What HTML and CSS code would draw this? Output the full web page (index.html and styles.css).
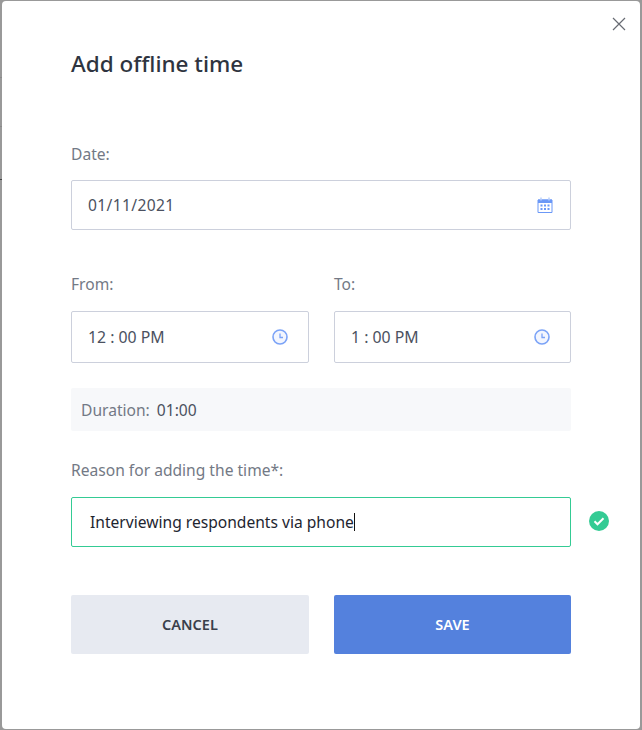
FILE: index.html
```html
<!DOCTYPE html>
<html lang="en">
<head>
<meta charset="utf-8">
<title>Add offline time</title>
<link rel="stylesheet" href="styles.css">
</head>
<body>
<div class="backdrop">
  <span class="bg-line bg-line-1"></span>
  <span class="bg-line bg-line-2"></span>
  <span class="bg-line bg-line-3"></span>
  <main class="modal">
    <button class="close" aria-label="Close">
      <svg width="14" height="14" viewBox="0 0 14 14"><path d="M1 1l12 12M13 1L1 13" fill="none" stroke="#676b73" stroke-width="1.2"/></svg>
    </button>
    <h1 class="title">Add offline time</h1>
    <div class="label label-date">Date:</div>
    <div class="field field-date">
      <span class="value value-date">01/11/2021</span>
      <svg class="icon" width="16" height="16" viewBox="0 0 16 16">
        <path d="M1 3h14v12.500H1z" fill="#fff" stroke="#6b98f7" stroke-width="1"/>
        <path d="M1 2.500h14V6H1z" fill="#6b98f7"/>
        <path d="M4 .5v3M12 .5v3" stroke="#b9cffb" stroke-width="1.500"/>
        <g fill="#6b98f7"><rect x="3.500" y="7.500" width="2" height="2"/><rect x="7" y="7.500" width="2" height="2"/><rect x="10.500" y="7.500" width="2" height="2"/><rect x="3.500" y="11" width="2" height="2"/><rect x="7" y="11" width="2" height="2"/><rect x="10.500" y="11" width="2" height="2"/></g>
      </svg>
    </div>
    <div class="times">
      <div class="time-col">
        <div class="label">From:</div>
        <div class="field field-time">
          <span class="value">12 : 00 PM</span>
          <svg class="icon" width="16" height="16" viewBox="0 0 16 16"><circle cx="8" cy="8" r="7" fill="#f3f6fe" stroke="#7ba3f7" stroke-width="1.600"/><path d="M8 4.500V8.500H11" fill="none" stroke="#7ba3f7" stroke-width="1.300"/></svg>
        </div>
      </div>
      <div class="time-col">
        <div class="label">To:</div>
        <div class="field field-time">
          <span class="value">1 : 00 PM</span>
          <svg class="icon" width="16" height="16" viewBox="0 0 16 16"><circle cx="8" cy="8" r="7" fill="#f3f6fe" stroke="#7ba3f7" stroke-width="1.600"/><path d="M8 4.500V8.500H11" fill="none" stroke="#7ba3f7" stroke-width="1.300"/></svg>
        </div>
      </div>
    </div>
    <div class="duration"><span class="duration-label">Duration:</span><span class="duration-value">01:00</span></div>
    <div class="label label-reason">Reason for adding the time*:</div>
    <div class="reason-row">
      <div class="field field-reason"><span class="reason-text">Interviewing respondents via phone</span><span class="caret"></span></div>
      <svg class="valid" width="20" height="20" viewBox="0 0 20 20"><circle cx="10" cy="10" r="10" fill="#34cb94"/><path d="M5.500 10.300l3 3 6-6" fill="none" stroke="#fff" stroke-width="2"/></svg>
    </div>
    <div class="actions">
      <button class="btn btn-cancel">CANCEL</button>
      <button class="btn btn-save">SAVE</button>
    </div>
  </main>
</div>
</body>
</html>
```
FILE: styles.css
```css
html, body {
  margin: 0;
  padding: 0;
  height: 100%;
}
body {
  font-family: "Noto Sans", "Open Sans", sans-serif;
  overflow: hidden;
}
.backdrop {
  position: relative;
  box-sizing: border-box;
  width: 642px;
  height: 730px;
  padding: 1px 2px;
  background: #999999;
}
.bg-line {
  position: absolute;
  left: 0;
  width: 2px;
  height: 1px;
  background: #8a8a8a;
}
.bg-line-1 { top: 77px; }
.bg-line-2 { top: 126px; }
.bg-line-3 { top: 179px; background: #444444; }
.modal {
  position: relative;
  box-sizing: border-box;
  height: 728px;
  padding: 48px 69px 0;
  background: #ffffff;
  border-radius: 4px;
}
.close {
  position: absolute;
  top: 16px;
  right: 14px;
  display: flex;
  padding: 0;
  border: 0;
  background: none;
}
.title {
  margin: 0;
  font-size: 22.500px;
  line-height: 30px;
  font-weight: 500;
  color: #2e3440;
}
.label {
  font-size: 15.600px;
  line-height: 20px;
  color: #737985;
}
.label-date {
  margin-top: 65px;
}
.field {
  box-sizing: border-box;
  display: flex;
  align-items: center;
  justify-content: space-between;
  background: #ffffff;
  border: 1px solid #ccd0dc;
  border-radius: 2px;
}
.field-date {
  height: 50px;
  margin-top: 16px;
  padding: 0 17px 0 16px;
}
.value {
  font-size: 15.800px;
  color: #4b5160;
}
.value-date {
  font-size: 15.600px;
  letter-spacing: 0.35px;
}
.times {
  display: grid;
  grid-template-columns: 238px 237px;
  column-gap: 25px;
  margin-top: 44px;
}
.field-time {
  height: 52px;
  margin-top: 17px;
  padding: 0 20px 0 16px;
}
.duration {
  display: flex;
  align-items: center;
  gap: 7px;
  height: 43px;
  margin-top: 25px;
  padding-left: 10px;
  background: #f7f8fa;
  border-radius: 2px;
  font-size: 15.600px;
}
.duration-label {
  color: #737985;
}
.duration-value {
  color: #4b5160;
}
.label-reason {
  margin-top: 29px;
}
.reason-row {
  display: flex;
  align-items: center;
  gap: 18px;
  margin-top: 17px;
  width: 538px;
}
.field-reason {
  flex: none;
  width: 500px;
  height: 50px;
  justify-content: flex-start;
  padding-left: 18px;
  border-color: #34cb94;
}
.reason-text {
  font-size: 15.600px;
  color: #1e2530;
}
.caret {
  width: 1px;
  height: 18px;
  background: #111111;
}
.valid {
  margin-bottom: 2px;
}
.actions {
  display: grid;
  grid-template-columns: 238px 237px;
  column-gap: 25px;
  margin-top: 48px;
}
.btn {
  height: 59px;
  padding: 0 0 2px;
  border: 0;
  border-radius: 2px;
  font-family: inherit;
  font-size: 14.500px;
  font-weight: 600;
}
.btn-cancel {
  background: #e7eaf1;
  color: #3a3f4b;
}
.btn-save {
  background: #5481dd;
  color: #ffffff;
}
```
